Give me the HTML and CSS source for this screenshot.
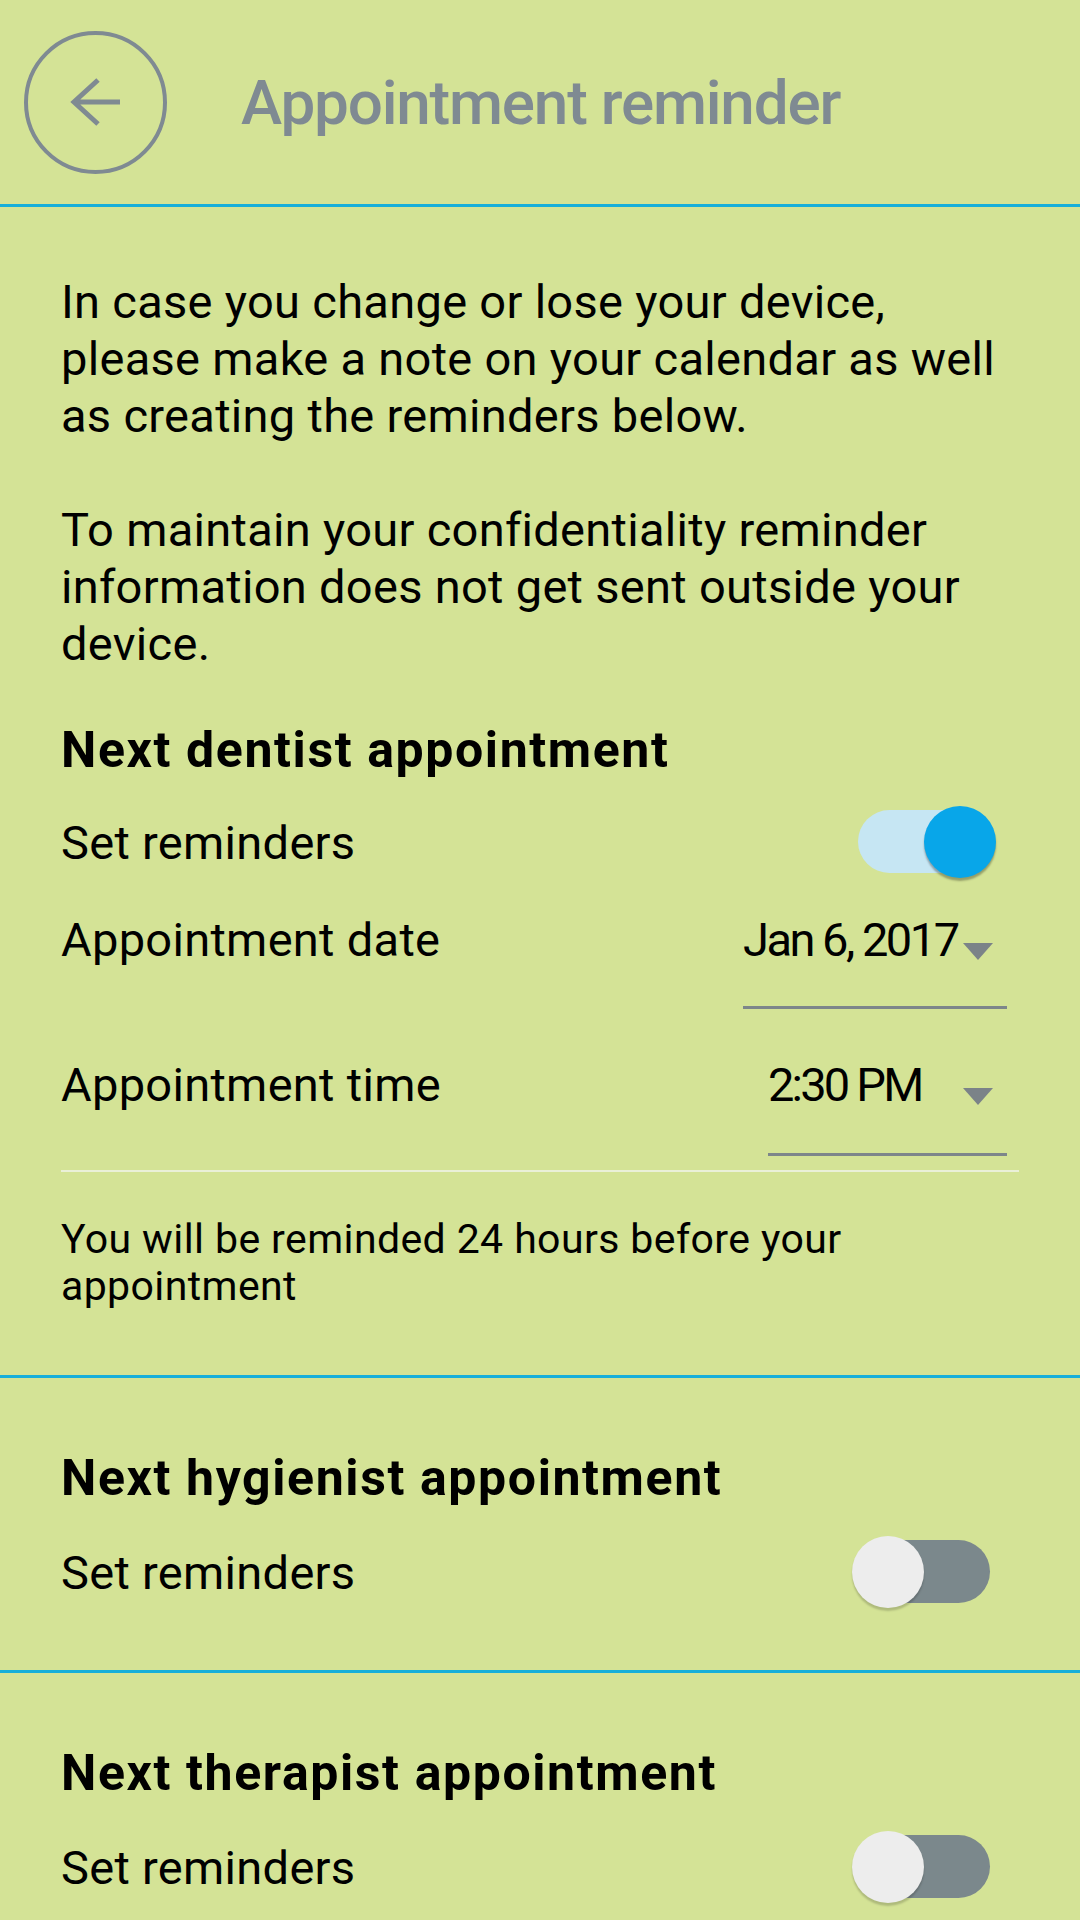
FILE: index.html
```html
<!DOCTYPE html>
<html>
  <head>
    <title>Appointment reminder</title>
    <link rel="stylesheet" href="styles.css">
  </head>
  <body>
    <header class="topbar">
      <button class="back" aria-label="Back">
        <svg width="143" height="143" viewBox="0 0 143 143">
          <circle cx="71.5" cy="71.5" r="69.5" fill="none" stroke="#7f8a92" stroke-width="4" />
          <path d="M96 71H50M74 49L50 71L74 93" fill="none" stroke="#7f8a92" stroke-width="5" />
        </svg>
      </button>
      <h1>Appointment reminder</h1>
    </header>

    <section class="block intro">
      <p class="info">
        In case you change or lose your device,<br>
        please make a note on your calendar as well<br>
        as creating the reminders below.<br><br>
        To maintain your confidentiality reminder<br>
        information does not get sent outside your<br>
        device.
      </p>

      <h2>Next dentist appointment</h2>
      <div class="row">
        <span class="label">Set reminders</span>
        <span class="toggle on"><span class="track"></span><span class="thumb"></span></span>
      </div>
      <div class="row field date">
        <span class="label">Appointment date</span>
        <span class="picker">Jan 6, 2017<i class="caret"></i></span>
      </div>
      <div class="row field time">
        <span class="label">Appointment time</span>
        <span class="picker">2:30 PM<i class="caret"></i></span>
      </div>
      <hr class="rule">
      <p class="note">You will be reminded 24 hours before your<br>appointment</p>
    </section>

    <section class="block">
      <h2>Next hygienist appointment</h2>
      <div class="row">
        <span class="label">Set reminders</span>
        <span class="toggle"><span class="track"></span><span class="thumb"></span></span>
      </div>
    </section>

    <section class="block last">
      <h2>Next therapist appointment</h2>
      <div class="row">
        <span class="label">Set reminders</span>
        <span class="toggle"><span class="track"></span><span class="thumb"></span></span>
      </div>
    </section>
  </body>
</html>
```

FILE: styles.css
```css
* {
  margin: 0;
  padding: 0;
  box-sizing: border-box;
}

html,
body {
  height: 100%;
}

body {
  background-color: #d4e396;
  color: #000;
  font-family: Roboto, "Noto Sans", sans-serif;
  overflow: hidden;
}

/* Top bar */
.topbar {
  display: flex;
  align-items: center;
  height: 207px;
  padding-left: 24px;
  border-bottom: 3px solid #17afda;
}

.back {
  width: 143px;
  height: 143px;
  background: none;
  border: none;
  display: flex;
}

.topbar h1 {
  margin-left: 74px;
  font-size: 62px;
  font-weight: 500;
  color: #7f8a92;
  letter-spacing: -1.2px;
}

/* Sections */
.block {
  padding: 0 61px;
  border-bottom: 3px solid #17afda;
}

.block.last {
  border-bottom: none;
}

.info {
  margin-top: 66px;
  font-size: 47px;
  line-height: 57px;
  letter-spacing: 0.3px;
}

h2 {
  font-size: 50px;
  line-height: 60px;
  font-weight: 700;
  letter-spacing: 1.6px;
  margin-top: 70px;
}

.intro h2 {
  margin-top: 48px;
}

.row {
  display: flex;
  align-items: center;
  justify-content: space-between;
  height: 80px;
  margin-top: 24px;
  font-size: 47px;
  line-height: 57px;
  letter-spacing: 0.3px;
  white-space: nowrap;
}

.intro .row {
  margin-top: 22px;
}

.block .row:last-child {
  margin-bottom: 58px;
}

/* Toggle switch */
.toggle {
  position: relative;
  width: 144px;
  height: 72px;
  margin-right: 23px;
}

.track {
  position: absolute;
  left: 6px;
  right: 6px;
  top: 4px;
  height: 63px;
  border-radius: 32px;
  background-color: #7b888c;
}

.thumb {
  position: absolute;
  left: 0;
  top: 0;
  width: 72px;
  height: 72px;
  border-radius: 50%;
  background-color: #ededed;
  box-shadow: 0 3px 2px rgba(0, 0, 0, 0.18);
}

.toggle.on .track {
  background-color: #c6e6f3;
}

.toggle.on .thumb {
  left: auto;
  right: 0;
  background-color: #08a6e9;
  box-shadow: 0 3px 2px rgba(0, 0, 0, 0.3);
}

/* Date / time pickers */
.field {
  height: auto;
  align-items: flex-start;
}

.intro .field.date {
  margin-top: 29px;
}

.intro .field.time {
  margin-top: 47px;
}

.picker {
  display: flex;
  justify-content: space-between;
  align-items: flex-start;
  margin-right: 12px;
  padding-bottom: 38px;
  padding-right: 14px;
  border-bottom: 3px solid #7d868a;
  letter-spacing: -2.5px;
}

.date .picker {
  width: 264px;
}

.time .picker {
  width: 239px;
  padding-bottom: 40px;
  letter-spacing: -2.8px;
}

.caret {
  width: 0;
  height: 0;
  margin-top: 32px;
  border-left: 15px solid transparent;
  border-right: 15px solid transparent;
  border-top: 17px solid #7b8388;
}

.rule {
  border: none;
  height: 2px;
  margin-top: 14px;
  background-color: #eaf0d8;
}

.note {
  margin-top: 44px;
  padding-bottom: 65px;
  font-size: 41px;
  line-height: 47px;
  letter-spacing: 0.4px;
}
```
